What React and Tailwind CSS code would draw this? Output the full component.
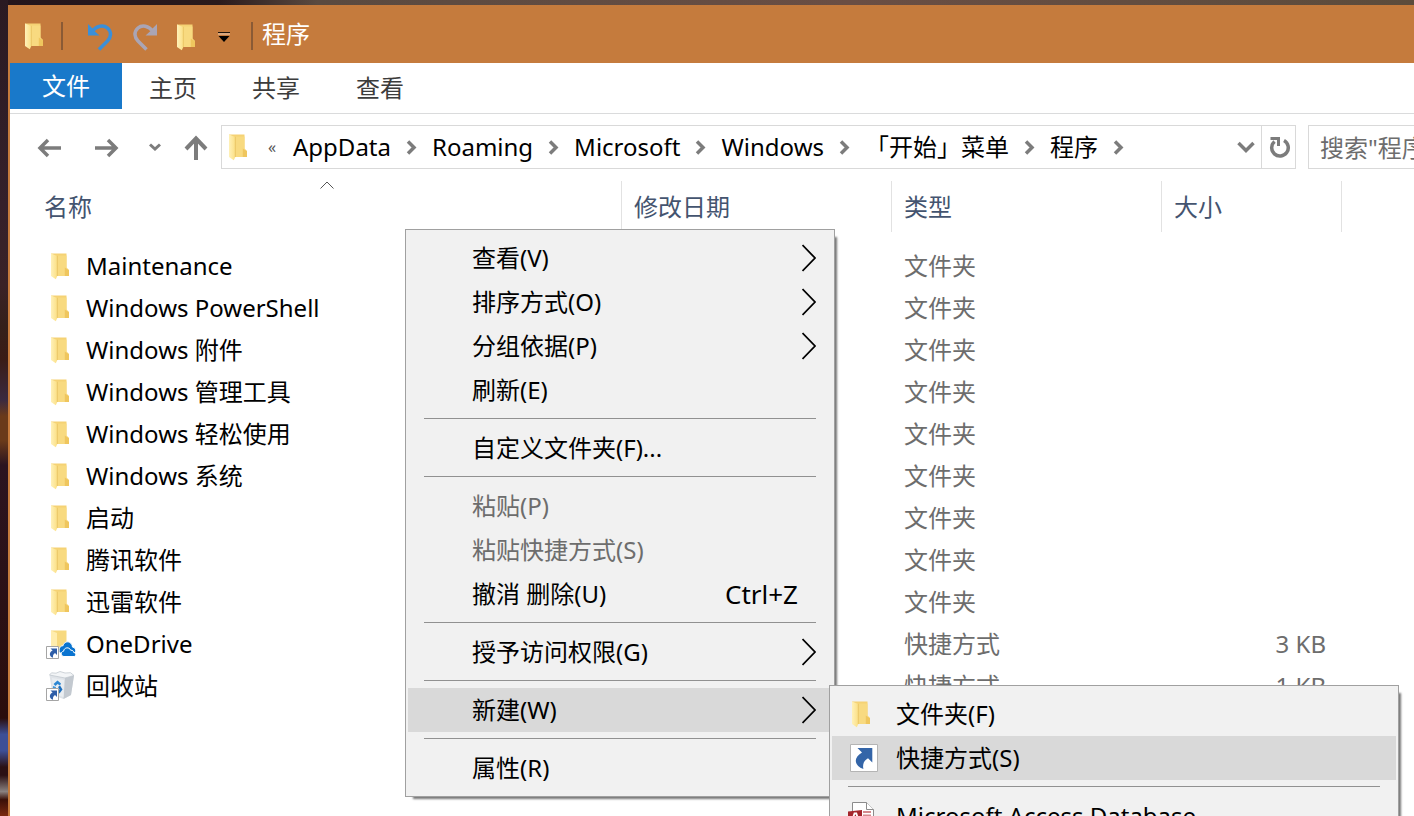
import { useId } from "react";

const crumbs = ["AppData", "Roaming", "Microsoft", "Windows", "「开始」菜单", "程序"];

const files = [
  { name: "Maintenance", icon: "folder", type: "文件夹" },
  { name: "Windows PowerShell", icon: "folder", type: "文件夹" },
  { name: "Windows 附件", icon: "folder", type: "文件夹" },
  { name: "Windows 管理工具", icon: "folder", type: "文件夹" },
  { name: "Windows 轻松使用", icon: "folder", type: "文件夹" },
  { name: "Windows 系统", icon: "folder", type: "文件夹" },
  { name: "启动", icon: "folder", type: "文件夹" },
  { name: "腾讯软件", icon: "folder", type: "文件夹" },
  { name: "迅雷软件", icon: "folder", type: "文件夹" },
  { name: "OneDrive", icon: "onedrive", type: "快捷方式", size: "3 KB" },
  { name: "回收站", icon: "bin", type: "快捷方式", size: "1 KB" },
];

const menu = [
  { label: "查看(V)", sub: true },
  { label: "排序方式(O)", sub: true },
  { label: "分组依据(P)", sub: true },
  { label: "刷新(E)" },
  null,
  { label: "自定义文件夹(F)..." },
  null,
  { label: "粘贴(P)", disabled: true },
  { label: "粘贴快捷方式(S)", disabled: true },
  { label: "撤消 删除(U)", hint: "Ctrl+Z" },
  null,
  { label: "授予访问权限(G)", sub: true },
  null,
  { label: "新建(W)", sub: true, open: true },
  null,
  { label: "属性(R)" },
];

function FolderIcon({ className = "" }) {
  const id = useId();
  return (
    <svg viewBox="0 0 20 28" className={`h-7 w-5 shrink-0 ${className}`} aria-hidden="true">
      <defs>
        <linearGradient id={id} x1="0" x2="1" y1="0" y2="0">
          <stop offset="0" stopColor="#fff1b8" />
          <stop offset="1" stopColor="#fbdf85" />
        </linearGradient>
      </defs>
      <path d="M1 1.5h15.5v14.2l2.5 2.8V24H6.5z" fill="#f5d274" />
      <path d="M8 3.5h8.5v12L19 18v6H8z" fill="#f8da80" />
      <path d="M14.8 15.5 19 18.3V24h-4.2z" fill="#efc65e" />
      <path d="M1 1.5 7.3 4v20l-1.5 3.2L1 24z" fill={`url(#${id})`} />
      <path d="M7.3 4v20" stroke="#e7c062" strokeWidth=".7" />
    </svg>
  );
}

function ShortcutBadge() {
  return (
    <g>
      <path d="M.5 17.5h12v12H.5z" fill="#fff" stroke="#a5a5a5" />
      <path
        d="M4.500 19.500h6.500v6.500l-2-1.900c-1.800 1.200-2.300 2.600-1.900 4.600-3.800-1.200-4.600-5.200-.5-7.300z"
        fill="#2f5ea8"
      />
    </g>
  );
}

function OneDriveIcon() {
  return (
    <svg viewBox="0 0 30 30" className="h-[30px] w-[30px] shrink-0" aria-hidden="true">
      <path d="M5 1.5h15.5v14l2 2.5v6H10z" fill="#f7d97f" />
      <path d="m5 1.5 6 2.500v20l-6-2z" fill="#ffedae" />
      <path
        d="M13.500 24c-1.500-5 1.500-7.500 3.500-7.200 1-4 5-5 7.500-2.800 1.500 1.200 2 2.700 1.900 4 3 .5 4 3 3 6z"
        fill="#0a74d0"
        stroke="#fff"
      />
      <path
        d="M18 27.500c-3.300 0-4-4.700-.4-5.300.4-4.100 6-4.500 7-1 2.500-.2 3.100 1.500 3.100 2.200 3 .4 2.600 4.100.3 4.100z"
        fill="#0a74d0"
        stroke="#fff"
      />
      <ShortcutBadge />
    </svg>
  );
}

function RecycleBinIcon() {
  return (
    <svg viewBox="0 0 30 30" className="h-[30px] w-[30px] shrink-0" aria-hidden="true">
      <path d="m3.500 4 3 20 11 4 7.500-4L28 4.500 17 2z" fill="#dfe3e8" />
      <path d="m19 7 9-2.500L25 24l-7.500 4z" fill="#c3c9d0" />
      <path d="m3.500 4 2-2.200 4.500.4L14 .5l5 1.500 5.500-.3L28 4.500 19 7z" fill="#f3f5f7" stroke="#bcc3ca" strokeWidth=".7" />
      <path d="m6 7 12 2-.5 17-10-3z" fill="#e9edf1" />
      <path d="m7.500 13 4-3.500 3.500 3-1 2-2.500-1.500-2 2z" fill="#2b86d3" />
      <path d="m14 14.500 2.500 4-3 4-1.500-1.500 1.500-2.500-1.500-2.500z" fill="#1d6fbe" />
      <path d="m7 15 3 1-.5 3 2.500 1.500-1 2-4.500-2.500z" fill="#3c95dd" />
      <ShortcutBadge />
    </svg>
  );
}

function ShortcutIcon() {
  return (
    <svg viewBox="0 0 28 28" className="h-7 w-7 shrink-0" aria-hidden="true">
      <path d="M.5.5h27v27H.5z" fill="#fff" stroke="#b4b4b4" />
      <path
        d="M7.500 4h14.800v14.500l-4.300-4.300c-4 2.600-5.700 5.600-4.600 10.800-9.500-3.300-10.300-11.500-1.400-16.500z"
        fill="#3465a8"
      />
    </svg>
  );
}

function AccessIcon() {
  return (
    <svg viewBox="0 0 28 28" className="h-7 w-7 shrink-0" aria-hidden="true">
      <path d="M4.500.5h14l7 7v20h-21z" fill="#fff" stroke="#8c8c8c" />
      <path d="M18.500.5v7h7" fill="#fff" stroke="#8c8c8c" />
      <path d="M15 10h8M15 13.500h8M15 17h8" stroke="#d58a8e" strokeWidth="2" />
      <path d="M0 9.500 14 8v17L0 23z" fill="#a4262c" />
      <path d="m3.500 20.500 3-9h1.800l3 9M4.600 17.300h5.500" fill="none" stroke="#fff" strokeWidth="1.800" />
    </svg>
  );
}

function FileIcon({ kind }) {
  if (kind === "onedrive") return <OneDriveIcon />;
  if (kind === "bin") return <RecycleBinIcon />;
  return <FolderIcon className="ml-1" />;
}

function TitleBar() {
  return (
    <header className="flex h-[58px] items-center bg-[#c57b3d] pl-[14px]">
      <FolderIcon className="mt-1" />
      <span className="ml-[17px] mt-1 h-7 w-[2px] bg-[#8a5a35]" />
      <div className="flex items-center pt-[6px]">
        <button aria-label="撤消" className="ml-[25px]">
          <svg viewBox="0 0 26 28" className="h-7 w-[26px]" fill="none" aria-hidden="true">
            <path d="M4 8.500C8.500 2.500 15.500 1.500 19.500 5c4.500 4 3.500 9.500 0 13l-8.500 8.500" stroke="#3b8fd8" strokeWidth="3.500" />
            <path d="M0 1l3.500 3.500 3 3.500 5 4.500H0z" fill="#3b8fd8" />
          </svg>
        </button>
        <button aria-label="恢复" className="ml-[18px]">
          <svg viewBox="0 0 26 28" className="h-7 w-[26px]" fill="none" aria-hidden="true">
            <path d="M21 8.500C16.500 2.500 10 1.500 6 5c-4.500 4-3.500 9.500 0 13l8.500 8.500" stroke="#aaa5b5" strokeWidth="3.500" />
            <path d="M25 1l-3.500 3.500-3 3.500-5 4.500H25z" fill="#aaa5b5" />
          </svg>
        </button>
        <button aria-label="新建文件夹" className="ml-[18px]">
          <FolderIcon />
        </button>
        <button aria-label="自定义快速访问工具栏" className="ml-[22px]">
          <svg viewBox="0 0 12 12" className="h-3 w-3" aria-hidden="true">
            <path d="M0 1.500h12" stroke="#20150c" />
            <path d="M0 3h12" stroke="#ecd2bc" />
            <path d="M.5 5h11L6 11z" fill="#000" />
          </svg>
        </button>
      </div>
      <span className="ml-[21px] mt-1 h-7 w-[2px] bg-[#8a5a35]" />
      <h1 className="ml-[9px] text-white">程序</h1>
    </header>
  );
}

function Ribbon() {
  return (
    <nav className="flex h-[51px] border-b border-[#dadbdc] text-[#3c3c3c]">
      <button className="h-[46px] w-28 bg-[#1979ca] text-white">文件</button>
      <button className="w-[102px]">主页</button>
      <button className="w-[104px]">共享</button>
      <button className="w-[104px]">查看</button>
    </nav>
  );
}

function AddressRow() {
  return (
    <div className="flex items-center pt-[11px]">
      <button aria-label="后退" className="ml-[27px]">
        <svg viewBox="0 0 24 24" className="h-6 w-6" fill="none" stroke="#7c7c7c" strokeWidth="3.500" aria-hidden="true">
          <path d="M24 13H3M11 5l-8 8 8 8" />
        </svg>
      </button>
      <button aria-label="前进" className="ml-[34px]">
        <svg viewBox="0 0 24 24" className="h-6 w-6" fill="none" stroke="#7c7c7c" strokeWidth="3.500" aria-hidden="true">
          <path d="M0 13h21M13 5l8 8-8 8" />
        </svg>
      </button>
      <button aria-label="最近浏览的位置" className="ml-[30px]">
        <svg viewBox="0 0 12 8" className="h-2 w-3" fill="none" stroke="#7c7c7c" strokeWidth="3" aria-hidden="true">
          <path d="m1 1.500 5 4.500 5-4.500" />
        </svg>
      </button>
      <button aria-label="上移到" className="ml-[23px]">
        <svg viewBox="0 0 24 26" className="h-[26px] w-6" fill="none" stroke="#7c7c7c" strokeWidth="4" aria-hidden="true">
          <path d="M12 26V5M2 15 12 4.500 22 15" />
        </svg>
      </button>
      <div className="ml-[13px] flex h-11 min-w-0 flex-1 border border-[#d9d9d9]">
        <div className="flex min-w-0 flex-1 items-center pl-[6px]">
          <FolderIcon />
          <span className="ml-[20px] w-[25px] text-base text-[#555]">«</span>
          {crumbs.map((name) => (
            <div key={name} className="flex items-center">
              <a href="#" className="whitespace-nowrap">
                {name}
              </a>
              <svg viewBox="0 0 17 16" className="mx-3 h-4 w-[17px] shrink-0" fill="none" stroke="#7c7c7c" strokeWidth="3.500" aria-hidden="true">
                <path d="m5 2.500 6 6-6 6" />
              </svg>
            </div>
          ))}
        </div>
        <button aria-label="以前的位置" className="px-[6px]">
          <svg viewBox="0 0 18 12" className="h-3 w-[18px]" fill="none" stroke="#7c7c7c" strokeWidth="3.500" aria-hidden="true">
            <path d="m1.500 2 7.500 7.500L16.500 2" />
          </svg>
        </button>
        <button aria-label="刷新" className="w-[34px] border-l border-[#d9d9d9] pl-[7px]">
          <svg viewBox="0 0 22 24" className="h-6 w-[22px]" fill="none" stroke="#7c7c7c" strokeWidth="3.500" aria-hidden="true">
            <path d="M15 5.500a8.300 8.300 0 1 1-9.500 1" />
            <path d="M1.500 3.500h8V11" strokeWidth="3" />
          </svg>
        </button>
      </div>
      <input
        type="text"
        aria-label="搜索"
        placeholder={'搜索"程序"'}
        className="ml-3 h-11 w-[106px] shrink-0 border border-r-0 border-[#d9d9d9] pl-[11px] placeholder:text-[#6d6d6d]"
      />
    </div>
  );
}

function FileTable() {
  return (
    <div className="mt-3 pl-[22px]">
      <table className="w-full table-fixed border-collapse text-left">
        <colgroup>
          <col className="w-[590px]" />
          <col className="w-[270px]" />
          <col className="w-[270px]" />
          <col className="w-[180px]" />
          <col />
        </colgroup>
        <thead>
          <tr className="text-[#44546f]">
            {["名称", "修改日期", "类型", "大小"].map((title, i) => (
              <th key={title} className="p-0 pb-[13px] font-normal">
                <div className="relative flex h-[51px] items-center border-r border-[#e2e2e2] pl-3">
                  {title}
                  {i === 0 && (
                    <svg viewBox="0 0 14 8" className="absolute left-1/2 top-0 h-2 w-[14px] -translate-x-1/2" fill="none" stroke="#555" aria-hidden="true">
                      <path d="m.5 7.500 6.500-6.500 6.500 6.500" />
                    </svg>
                  )}
                </div>
              </th>
            ))}
            <td />
          </tr>
        </thead>
        <tbody>
          {files.map((file) => (
            <tr key={file.name} className="h-[42px] text-[#6d6d6d]">
              <td className="p-0 pl-[14px] text-black">
                <div className="flex items-center">
                  <span className="flex w-10 shrink-0">
                    <FileIcon kind={file.icon} />
                  </span>
                  {file.name}
                </div>
              </td>
              <td />
              <td className="p-0 pl-3">{file.type}</td>
              <td className="p-0 pr-4 text-right">{file.size}</td>
              <td />
            </tr>
          ))}
        </tbody>
      </table>
    </div>
  );
}

function Separator() {
  return (
    <li role="separator" className="px-4 pb-[7px] pt-[6px]">
      <div className="h-px bg-[#919191]" />
    </li>
  );
}

function NewMenu() {
  return (
    <ul className="absolute -top-[3px] left-full z-10 -ml-[3px] w-[570px] border border-[#a0a0a0] bg-[#f1f1f1] px-[2px] py-[6px] shadow-[5px_5px_2px_-3px_#777]">
      <li>
        <button className="flex h-11 w-full items-center pl-4">
          <span className="flex w-12 pl-[3px]">
            <FolderIcon />
          </span>
          文件夹(F)
        </button>
      </li>
      <li>
        <button className="flex h-11 w-full items-center bg-[#d9d9d9] pl-4">
          <span className="flex w-12 pl-[2px]">
            <ShortcutIcon />
          </span>
          快捷方式(S)
        </button>
      </li>
      <Separator />
      <li>
        <button className="flex h-11 w-full items-center pl-4">
          <span className="flex w-12">
            <AccessIcon />
          </span>
          Microsoft Access Database
        </button>
      </li>
    </ul>
  );
}

function ContextMenu() {
  return (
    <ul className="absolute left-[405px] top-[229px] w-[430px] border border-[#a0a0a0] bg-[#f1f1f1] px-[2px] py-[6px] shadow-[5px_5px_2px_-3px_#777]">
      {menu.map((item, i) =>
        item ? (
          <li key={item.label} className="relative">
            <button
              disabled={item.disabled}
              className={`flex h-11 w-full items-center pl-16 pr-4 ${
                item.disabled ? "text-[#6d6d6d]" : "text-black"
              } ${item.open ? "bg-[#d9d9d9]" : ""}`}
            >
              <span className="flex-1 text-left">{item.label}</span>
              {item.hint && <span className="mr-[18px] text-[26px]">{item.hint}</span>}
              {item.sub && (
                <svg viewBox="0 0 14 28" className="h-7 w-[14px]" fill="none" stroke="#000" strokeWidth="1.800" aria-hidden="true">
                  <path d="m.5 1 12.500 13-12.500 13" />
                </svg>
              )}
            </button>
            {item.open && <NewMenu />}
          </li>
        ) : (
          <Separator key={i} />
        )
      )}
    </ul>
  );
}

export default function App() {
  return (
    <div className="relative h-screen overflow-hidden bg-[linear-gradient(180deg,#2a1a22_0%,#35202a_25%,#3a2226_35%,#35201a_40%,#3a1c16_44%,#3a2a40_49%,#6a3a1a_51%,#6a3a1a_54%,#2c1420_57%,#2a0d0c_88%,#3d4f96_90%,#3d4f96_92%,#2c1014_94%,#2c1014_95%,#8a8280_97%,#3a1008_98%,#7a2a10_100%)] pl-2 font-['Noto_Sans','Noto_Sans_CJK_SC',sans-serif] text-2xl leading-8 text-black">
      <div className="h-[5px] bg-[linear-gradient(90deg,#24151c,#2a1a1c_15%,#5a4a40_22%,#6a4e44_60%,#5c4c3c)]" />
      <main className="min-h-full border-l-2 border-[#c57b3d] bg-white">
        <div className="-ml-[2px] border-l-2 border-[#c57b3d]">
          <TitleBar />
        </div>
        <Ribbon />
        <AddressRow />
        <FileTable />
      </main>
      <ContextMenu />
    </div>
  );
}
